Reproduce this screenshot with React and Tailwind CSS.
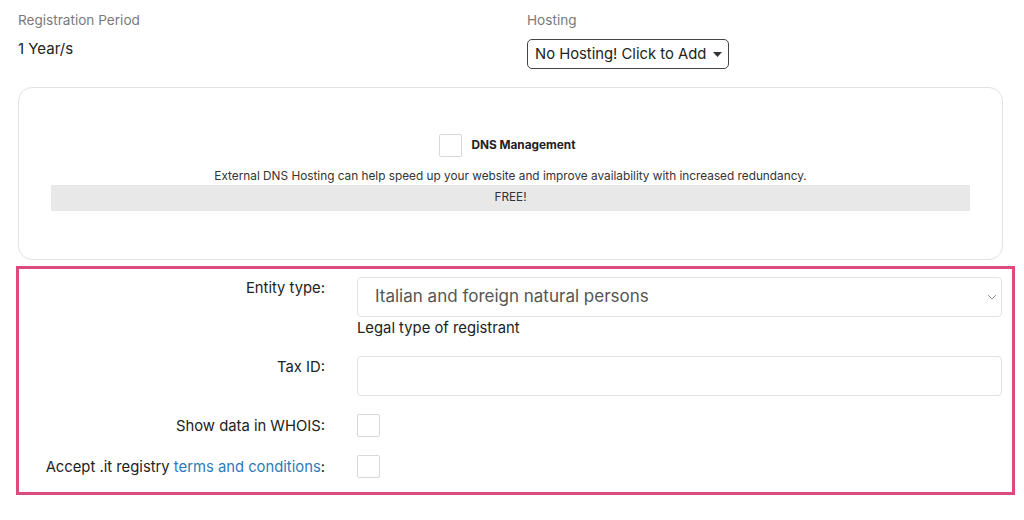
export default function App() {
  return (
    <div className="w-[1024px] h-[520px] bg-white overflow-hidden text-[#222]" style={{ fontFamily: 'Inter, "Noto Sans", sans-serif' }}>
      <div className="flex pt-[10px]">
        <div className="pl-[18px] w-[527px]">
          <div className="text-[13.6px] leading-[20px] text-[#7a7a7a]">Registration Period</div>
          <div className="text-[15px] leading-[20px] mt-[9px] text-[#222]">1 Year/s</div>
        </div>
        <div>
          <div className="text-[13.6px] leading-[20px] text-[#7a7a7a]">Hosting</div>
          <button className="mt-[9px] h-[30px] w-[202px] border border-[#444] rounded-[5px] flex items-center pl-[7px] text-[14.8px] text-[#222] bg-white">
            <span>No Hosting! Click to Add</span>
            <svg className="ml-[7px]" width="9" height="5" viewBox="0 0 9 5"><path d="M0 0 L9 0 L4.5 5 Z" fill="#333" /></svg>
          </button>
        </div>
      </div>

      <div className="ml-[18px] mt-[18px] w-[985px] h-[173px] border border-[#e2e2e2] rounded-[14px] flex flex-col items-center pt-[46px] px-[32px]">
        <div className="flex items-center pr-[6px]">
          <div className="w-[23px] h-[23px] border border-[#d8d8d8] rounded-[2px] bg-white" />
          <span className="ml-[9px] text-[11.8px] font-bold text-[#222]">DNS Management</span>
        </div>
        <div className="mt-[11px] text-[11.8px] leading-[16px] text-[#333]">External DNS Hosting can help speed up your website and improve availability with increased redundancy.</div>
        <div className="mt-[1px] w-full h-[26px] bg-[#e8e8e8] flex items-center justify-center text-[11.8px] text-[#333]">FREE!</div>
      </div>

      <div className="ml-[16px] mt-[6px] w-[999px] border-[3px] border-[#df4a7e] pt-[8px] pb-[14px] pr-[10px]">
        <div className="flex">
          <div className="w-[306px] text-right text-[14.8px] leading-[22px] text-[#222]">Entity type:</div>
          <div className="ml-[32px] flex-1">
            <div className="h-[40px] border border-[#e2e2e2] rounded-[4px] flex items-center pl-[17px] pr-[4px] text-[17px] text-[#555]">
              <span className="flex-1">Italian and foreign natural persons</span>
              <svg width="10" height="6" viewBox="0 0 10 6"><path d="M1 1 L5 5 L9 1" fill="none" stroke="#999" strokeWidth="1" /></svg>
            </div>
            <div className="text-[14.8px] leading-[22px] text-[#222]">Legal type of registrant</div>
          </div>
        </div>
        <div className="flex mt-[17px]">
          <div className="w-[306px] text-right text-[14.8px] leading-[22px] text-[#222]">Tax ID:</div>
          <div className="ml-[32px] flex-1">
            <div className="h-[40px] border border-[#e2e2e2] rounded-[4px]" />
          </div>
        </div>
        <div className="flex mt-[18px] items-center">
          <div className="w-[306px] text-right text-[14.8px] leading-[22px] text-[#222]">Show data in WHOIS:</div>
          <div className="ml-[32px] w-[23px] h-[23px] border border-[#d8d8d8] rounded-[2px]" />
        </div>
        <div className="flex mt-[18px] items-center">
          <div className="w-[306px] text-right text-[14.8px] leading-[22px] text-[#222]">Accept .it registry <span className="text-[#2b7bb9]">terms and conditions</span>:</div>
          <div className="ml-[32px] w-[23px] h-[23px] border border-[#d8d8d8] rounded-[2px]" />
        </div>
      </div>
    </div>
  );
}
